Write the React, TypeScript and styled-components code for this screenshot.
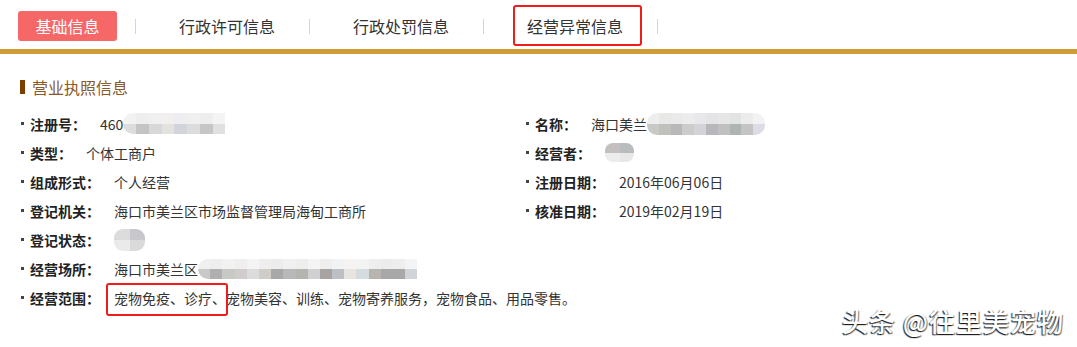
import styled, { createGlobalStyle } from "styled-components";

const GlobalStyle = createGlobalStyle`
  html, body {
    margin: 0;
    padding: 0;
    background: #fff;
  }
  body {
    font-family: "Noto Sans CJK SC", "Noto Sans", sans-serif;
    color: #333;
  }
`;

const Page = styled.div`
  position: relative;
  width: 1077px;
  height: 347px;
  overflow: hidden;
  background: #fff;
`;

const TabBar = styled.nav`
  display: flex;
  align-items: center;
  box-sizing: border-box;
  height: 54px;
  padding: 11px 0 8px 18px;
  border-bottom: 5px solid #cf9c38;
`;

const ActiveTab = styled.button`
  width: 99px;
  height: 30px;
  margin-right: 18px;
  border: none;
  border-radius: 3px;
  background: #f66868;
  color: #fff;
  font-family: inherit;
  font-size: 16px;
  padding: 0;
`;

const Divider = styled.span`
  width: 1px;
  height: 15px;
  background: #d5d5d5;
`;

const Tab = styled.span`
  font-size: 16px;
  line-height: 22px;
  color: #333;
  padding: 0 34px 0 43px;
`;

const Marked = styled.span<{ $inset: string }>`
  position: relative;

  &::after {
    content: "";
    position: absolute;
    inset: ${(p) => p.$inset};
    border: 2px solid #f01c1c;
    border-radius: 3px;
  }
`;

const Section = styled.section`
  padding: 22px 0 0 20px;
`;

const Title = styled.h3`
  display: flex;
  align-items: center;
  margin: 0;
  font-size: 16px;
  font-weight: normal;
  line-height: 22px;
  color: #8a5a2c;
`;

const TitleBar = styled.span`
  width: 5px;
  height: 14px;
  margin-right: 7px;
  background: #7b3f00;
`;

const InfoGrid = styled.div`
  display: grid;
  grid-template-columns: 505px 1fr;
  grid-auto-rows: 29px;
  margin-top: 11px;
  padding-left: 1px;
`;

const Field = styled.div<{ $wide?: boolean }>`
  display: flex;
  align-items: center;
  font-size: 14px;
  white-space: nowrap;
  grid-column: ${(p) => (p.$wide ? "1 / -1" : "auto")};
`;

const Bullet = styled.span`
  flex: none;
  width: 3px;
  height: 3px;
  margin-right: 6px;
  background: #444;
`;

const Label = styled.span`
  font-weight: bold;
  color: #222;
  margin-right: 14px;
`;

const Value = styled.span`
  display: flex;
  align-items: center;
  color: #333;
`;

const Mosaic = styled.span<{ $h: number; $round: string }>`
  display: flex;
  height: ${(p) => p.$h}px;
  border-radius: ${(p) => p.$round};
  overflow: hidden;
  filter: blur(0.4px);
`;

const MosaicCol = styled.span<{ $w: number }>`
  display: flex;
  flex-direction: column;
  width: ${(p) => p.$w}px;
`;

const MosaicCell = styled.span<{ $color: string }>`
  flex: 1;
  background: ${(p) => p.$color};
`;

const Watermark = styled.div`
  position: absolute;
  right: 13px;
  bottom: 11px;
  font-size: 26px;
  font-weight: 500;
  line-height: 30px;
  letter-spacing: 1px;
  color: #fff;
  text-shadow: -1px 1px 1px rgba(0, 0, 0, 0.85), 1px 1px 1px rgba(0, 0, 0, 0.55);
`;

type Cols = [string, string][];

interface BlurProps {
  cols: Cols;
  w: number;
  h: number;
  round?: string;
}

function Blur({ cols, w, h, round = "10px 0 0 10px" }: BlurProps) {
  return (
    <Mosaic $h={h} $round={round}>
      {cols.map(([top, bottom], i) => (
        <MosaicCol key={i} $w={w}>
          <MosaicCell $color={top} />
          <MosaicCell $color={bottom} />
        </MosaicCol>
      ))}
    </Mosaic>
  );
}

const regNoBlur: Cols = [
  ["#f2f2f2", "#dcdcdc"],
  ["#eeeeee", "#c4c4c4"],
  ["#f0f0f0", "#d8d8d8"],
  ["#f2f0ee", "#e4e2de"],
  ["#eeeef2", "#d2d4dc"],
  ["#f0f0f0", "#dcdcdc"],
  ["#eeeeee", "#c6c6c6"],
  ["#f4f4f4", "#e0e0e0"],
];

const nameBlur: Cols = [
  ["#eeeeee", "#c8c8c4"],
  ["#e8e8e6", "#c0c0bc"],
  ["#eaeaea", "#b8b8b8"],
  ["#ececec", "#cccccc"],
  ["#e8e8ea", "#d4d4d8"],
  ["#e4e4e6", "#b8b8bc"],
  ["#e6e6e6", "#c0c0c0"],
  ["#e2e4e2", "#b0b4b0"],
  ["#ececec", "#c4c4c4"],
  ["#f2f2f4", "#dcdce4"],
];

const operatorBlur: Cols = [
  ["#c4c0c0", "#ececec"],
  ["#b8bcbc", "#e8e8e8"],
];

const statusBlur: Cols = [
  ["#dcdcdc", "#eaeaea"],
  ["#c8c8cc", "#dadada"],
];

const placeBlur: Cols = [
  ["#f0f0f0", "#c8c8c8"],
  ["#eeeeee", "#b0b0b0"],
  ["#f2f2f0", "#c8c8c4"],
  ["#f0eeee", "#d0cccc"],
  ["#f4f4f4", "#dcdcdc"],
  ["#f0eeec", "#d0ccc8"],
  ["#ececec", "#a8a8a8"],
  ["#f0f0f0", "#b8b8b8"],
  ["#eeeeec", "#b4b4b0"],
  ["#f4f4f4", "#d0d0d0"],
  ["#eeeeee", "#a8a4a4"],
  ["#f0f2f4", "#bcc0c4"],
  ["#f6f4f2", "#e8e4e0"],
  ["#f2f4f4", "#d4dce0"],
  ["#eeeeee", "#b8b4b0"],
  ["#ececec", "#a8a8a8"],
  ["#eeeeee", "#a8a8a8"],
  ["#f2f4f6", "#d0d4d8"],
];

function App() {
  return (
    <Page>
      <GlobalStyle />
      <TabBar>
        <ActiveTab>基础信息</ActiveTab>
        <Divider />
        <Tab>行政许可信息</Tab>
        <Divider />
        <Tab>行政处罚信息</Tab>
        <Divider />
        <Tab>
          <Marked $inset="-9px -19px -8px -14px">经营异常信息</Marked>
        </Tab>
        <Divider />
      </TabBar>

      <Section>
        <Title>
          <TitleBar />
          营业执照信息
        </Title>
        <InfoGrid>
          <Field>
            <Bullet />
            <Label>注册号：</Label>
            <Value>
              460
              <Blur cols={regNoBlur} w={12.75} h={21} />
            </Value>
          </Field>
          <Field>
            <Bullet />
            <Label>名称：</Label>
            <Value>
              海口美兰
              <Blur cols={nameBlur} w={11.8} h={22} round="10px" />
            </Value>
          </Field>
          <Field>
            <Bullet />
            <Label>类型：</Label>
            <Value>个体工商户</Value>
          </Field>
          <Field>
            <Bullet />
            <Label>经营者：</Label>
            <Value>
              <Blur cols={operatorBlur} w={14.5} h={19} round="8px" />
            </Value>
          </Field>
          <Field>
            <Bullet />
            <Label>组成形式：</Label>
            <Value>个人经营</Value>
          </Field>
          <Field>
            <Bullet />
            <Label>注册日期：</Label>
            <Value>2016年06月06日</Value>
          </Field>
          <Field>
            <Bullet />
            <Label>登记机关：</Label>
            <Value>海口市美兰区市场监督管理局海甸工商所</Value>
          </Field>
          <Field>
            <Bullet />
            <Label>核准日期：</Label>
            <Value>2019年02月19日</Value>
          </Field>
          <Field $wide>
            <Bullet />
            <Label>登记状态：</Label>
            <Value>
              <Blur cols={statusBlur} w={15.5} h={22} round="9px" />
            </Value>
          </Field>
          <Field $wide>
            <Bullet />
            <Label>经营场所：</Label>
            <Value>
              海口市美兰区
              <Blur cols={placeBlur} w={12.2} h={20} />
            </Value>
          </Field>
          <Field $wide>
            <Bullet />
            <Label>经营范围：</Label>
            <Value>
              <Marked $inset="-5px -2px -8px -8px">宠物免疫、诊疗、</Marked>
              宠物美容、训练、宠物寄养服务，宠物食品、用品零售。
            </Value>
          </Field>
        </InfoGrid>
      </Section>

      <Watermark>头条 @往里美宠物</Watermark>
    </Page>
  );
}

export default App;
